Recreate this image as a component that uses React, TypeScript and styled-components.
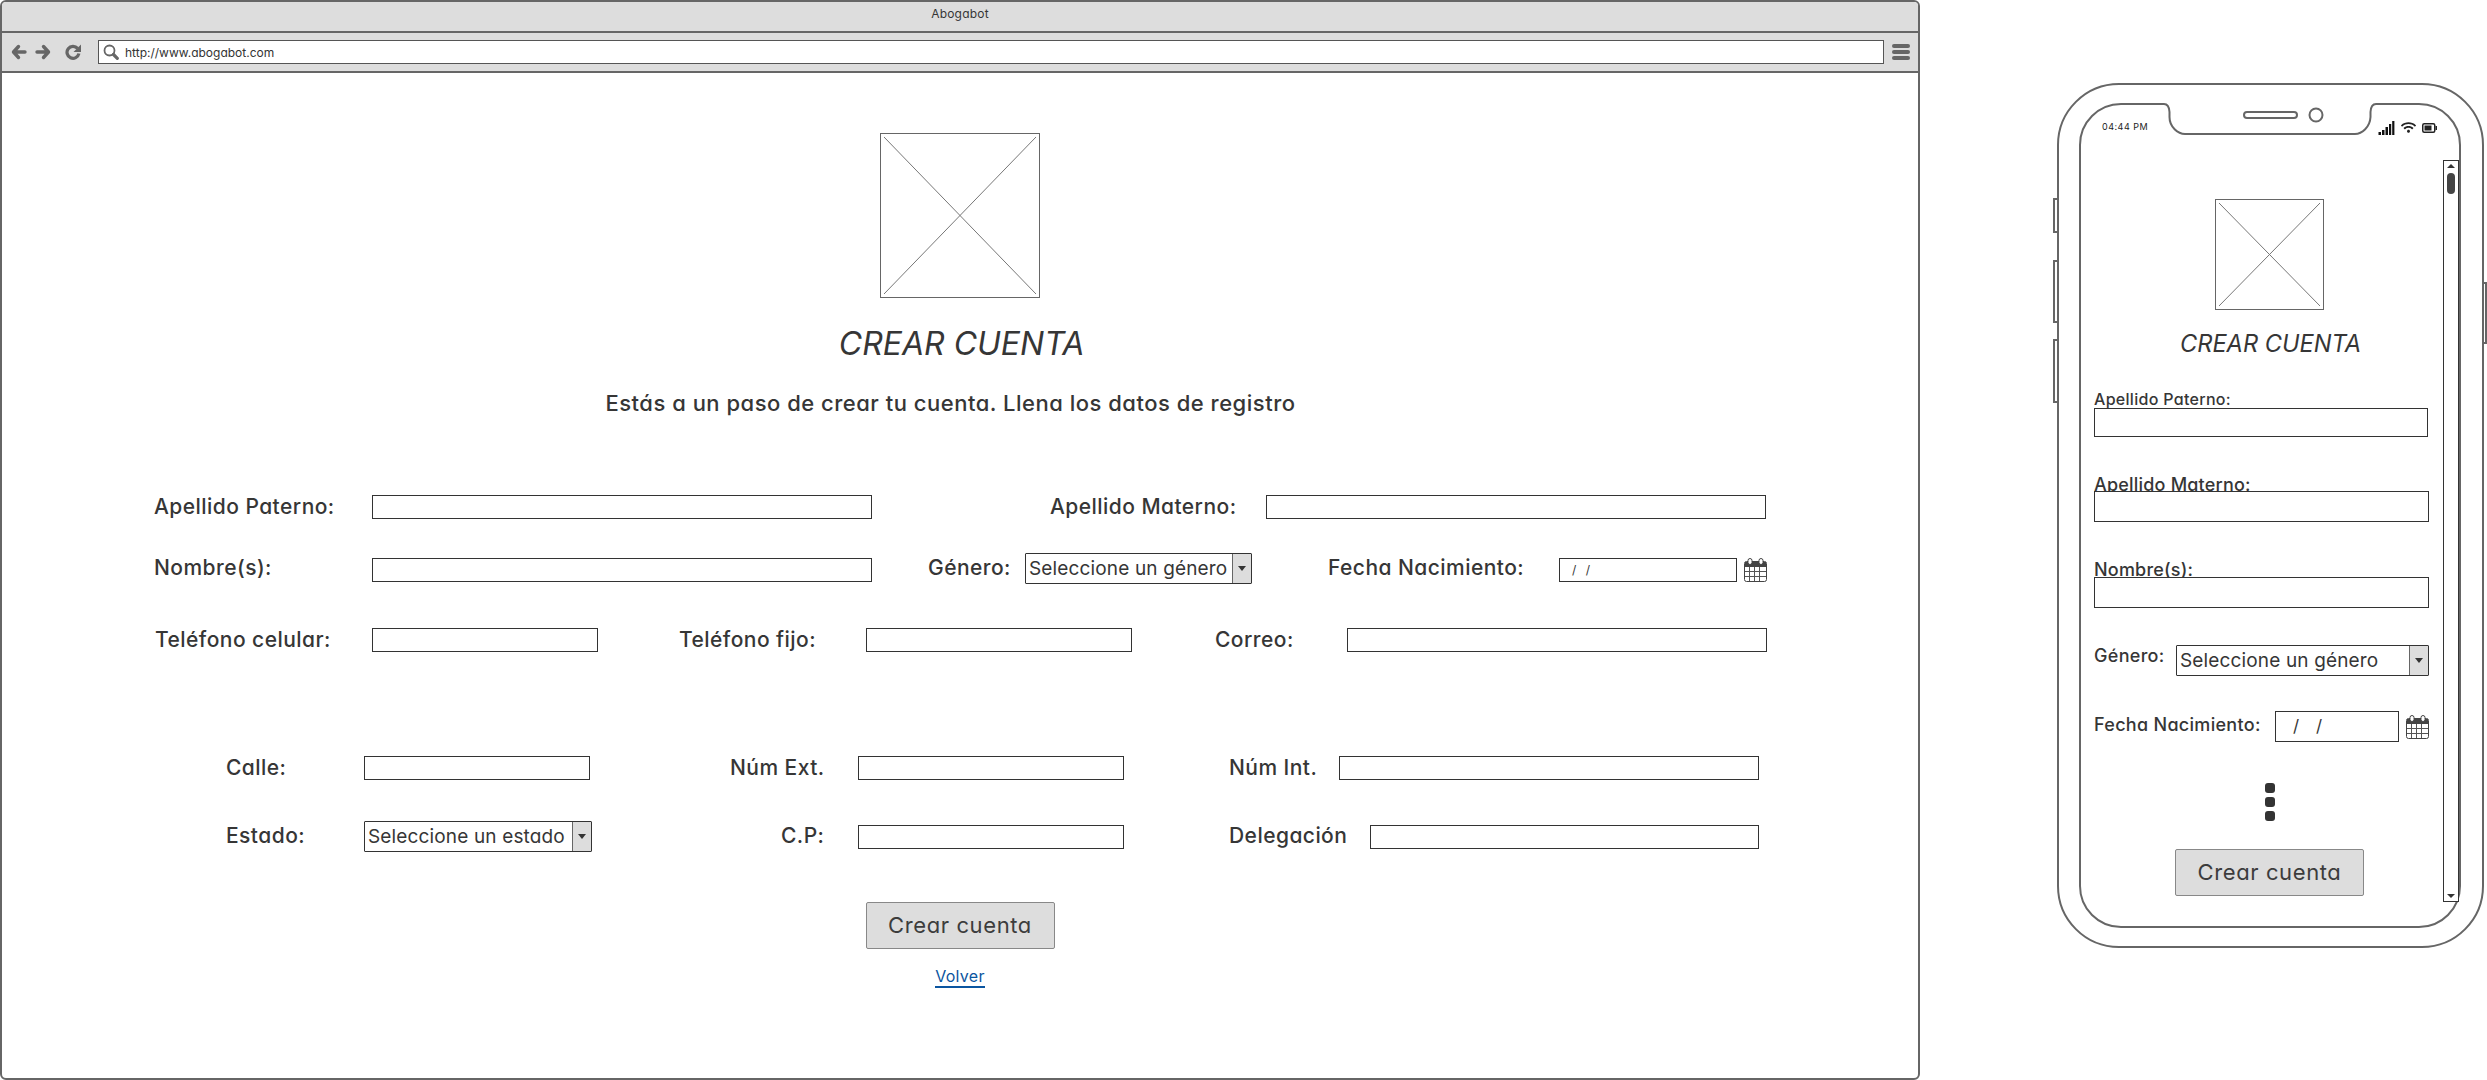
import React from 'react';
import styled, { createGlobalStyle } from 'styled-components';
import { FaWifi } from 'react-icons/fa';

const GlobalStyle = createGlobalStyle`
  html, body {
    margin: 0;
    padding: 0;
    background: #fff;
    overflow: hidden;
  }
  * {
    box-sizing: border-box;
  }
  body {
    font-family: Inter, "Open Sans", sans-serif;
    font-feature-settings: "cv11";
    color: #363636;
  }
`;

const Page = styled('div')`
  display: flex;
  align-items: flex-start;
  width: 2487px;
  height: 1080px;
`;

const Browser = styled('div')`
  width: 1920px;
  height: 1080px;
  flex: none;
  border: 2px solid #666;
  border-radius: 6px;
  display: flex;
  flex-direction: column;
  overflow: hidden;
`;

const TitleBar = styled('div')`
  height: 31px;
  flex: none;
  background: #ddd;
  border-bottom: 2px solid #666;
  display: flex;
  justify-content: center;
  padding-top: 4px;
  font-size: 12px;
  line-height: 16px;
  letter-spacing: 0.2px;
`;

const Toolbar = styled('div')`
  height: 40px;
  flex: none;
  background: #ddd;
  border-bottom: 2px solid #666;
  display: flex;
  align-items: center;
  padding-left: 9px;
`;

const NavIcon = styled('svg')<{ $mr: number }>`
  flex: none;
  width: 16px;
  height: 16px;
  margin-right: ${(p) => p.$mr}px;
  fill: none;
  stroke: #666;
`;

const UrlBox = styled('div')`
  width: 1786px;
  height: 24px;
  background: #fff;
  border: 1px solid #555;
  display: flex;
  align-items: center;
  padding-left: 4px;
`;

const UrlText = styled('span')`
  color: #333;
  font-size: 12px;
  margin-left: 6px;
`;

const Burger = styled('div')`
  margin-left: 8px;
  width: 18px;
  display: flex;
  flex-direction: column;
  gap: 2px;
  span {
    display: block;
    height: 4px;
    border-radius: 2px;
    background: #666;
  }
`;

const Content = styled('div')`
  flex: 1;
  display: flex;
  flex-direction: column;
`;

const Hero = styled('div')`
  display: flex;
  flex-direction: column;
  align-items: center;
`;

const PlaceholderBox = styled('div')<{ $w: number; $h: number; $mt: number }>`
  width: ${(p) => p.$w}px;
  height: ${(p) => p.$h}px;
  margin-top: ${(p) => p.$mt}px;
  flex: none;
  background: #fff;
  border: 1px solid #666;
  padding: 3px;
  svg {
    display: block;
    width: 100%;
    height: 100%;
  }
`;

const Title = styled('h1')<{ $size: number; $mt: number; $ml: number }>`
  margin: ${(p) => p.$mt}px 0 0 ${(p) => p.$ml}px;
  font-size: ${(p) => p.$size}px;
  font-style: italic;
  font-weight: 400;
  line-height: 1.3;
  white-space: nowrap;
`;

const Subtitle = styled('p')`
  margin: 23px 0 0 -19px;
  font-size: 22px;
  font-weight: 500;
  line-height: 30px;
  letter-spacing: 0.5px;
  white-space: nowrap;
`;

const FormRow = styled('div')<{ $pl: number; $mt: number; $h: number }>`
  display: flex;
  align-items: center;
  height: ${(p) => p.$h}px;
  margin-top: ${(p) => p.$mt}px;
  padding-left: ${(p) => p.$pl}px;
`;

const Label = styled('label')<{ $w: number; $ml?: number }>`
  flex: none;
  width: ${(p) => p.$w}px;
  margin-left: ${(p) => p.$ml ?? 0}px;
  font-size: 21px;
  font-weight: 500;
  line-height: 24px;
  letter-spacing: 0.45px;
  white-space: nowrap;
`;

const TextInput = styled('input')<{ $w: number; $h?: number; $nudge?: number }>`
  flex: none;
  display: block;
  width: ${(p) => p.$w}px;
  height: ${(p) => p.$h ?? 24}px;
  margin-top: ${(p) => p.$nudge ?? 0}px;
  padding: 0;
  background: #fff;
  border: 1px solid #333;
  border-radius: 0;
  outline: none;
`;

const SelectBox = styled('div')<{ $w: number }>`
  flex: none;
  width: ${(p) => p.$w}px;
  height: 31px;
  display: flex;
  background: #fff;
  border: 1px solid #333;
  border-radius: 1px;
`;

const SelectText = styled('span')`
  flex: 1;
  padding-left: 3px;
  font-size: 19px;
  line-height: 29px;
  letter-spacing: 0.15px;
  white-space: nowrap;
`;

const SelectArrow = styled('span')`
  flex: none;
  width: 19px;
  background: #ddd;
  border-left: 1px solid #666;
  display: flex;
  align-items: center;
  justify-content: center;
  &::after {
    content: '';
    border-left: 4px solid transparent;
    border-right: 4px solid transparent;
    border-top: 5px solid #333;
  }
`;

const DateBox = styled('div')<{ $w: number; $h: number; $pl: number; $size: number; $ls: number; $nudge?: number }>`
  flex: none;
  width: ${(p) => p.$w}px;
  height: ${(p) => p.$h}px;
  margin-top: ${(p) => p.$nudge ?? 0}px;
  background: #fff;
  border: 1px solid #333;
  padding-left: ${(p) => p.$pl}px;
  font-size: ${(p) => p.$size}px;
  line-height: ${(p) => p.$h - 2}px;
  letter-spacing: ${(p) => p.$ls}px;
  white-space: pre;
`;

const CalendarIcon = styled('svg')<{ $nudge?: number }>`
  flex: none;
  width: 23px;
  height: 24px;
  margin-left: 7px;
  margin-top: ${(p) => p.$nudge ?? 0}px;
`;

const ActionButton = styled('button')<{ $w: number; $mt: number }>`
  display: block;
  width: ${(p) => p.$w}px;
  height: 47px;
  margin-top: ${(p) => p.$mt}px;
  padding: 0;
  background: #ddd;
  border: 1px solid #888;
  border-radius: 2px;
  color: #3c3c3c;
  font-family: inherit;
  font-feature-settings: inherit;
  font-size: 22px;
  letter-spacing: 0.6px;
`;

const BackLink = styled('a')`
  display: block;
  margin-top: 18px;
  font-size: 16px;
  line-height: 19px;
  color: #0b55a0;
  border-bottom: 2px solid #0b55a0;
  letter-spacing: 0.3px;
`;

const PhoneWrap = styled('div')`
  display: flex;
  flex: none;
  margin-left: 133px;
  margin-top: 83px;
`;

const SideKeys = styled('div')<{ $w: number; $pt: number }>`
  flex: none;
  width: ${(p) => p.$w}px;
  padding-top: ${(p) => p.$pt}px;
  display: flex;
  flex-direction: column;
`;

const SideKey = styled('div')<{ $h: number; $mb?: number; $right?: boolean }>`
  height: ${(p) => p.$h}px;
  margin-bottom: ${(p) => p.$mb ?? 0}px;
  background: #fff;
  border: 2px solid #666;
  ${(p) => (p.$right ? 'border-left: none;' : 'border-right: none;')}
`;

const Phone = styled('div')`
  width: 427px;
  height: 865px;
  flex: none;
  border: 2px solid #666;
  border-radius: 62px;
  padding: 18px 0 0 20px;
`;

const Screen = styled('div')`
  width: 382px;
  height: 825px;
  border: 2px solid #666;
  border-radius: 42px;
  display: flex;
  flex-direction: column;
`;

const StatusBar = styled('div')`
  height: 55px;
  flex: none;
  display: flex;
  align-items: flex-start;
`;

const Clock = styled('span')`
  width: 83px;
  flex: none;
  padding: 16px 0 0 21px;
  font-size: 9px;
  line-height: 12px;
  letter-spacing: 0.5px;
  color: #222;
`;

const NotchArt = styled('svg')`
  flex: none;
  margin-top: -2px;
`;

const StatusIcons = styled('div')`
  flex: none;
  display: flex;
  align-items: center;
  gap: 6px;
  margin-left: 2px;
  margin-top: 15px;
  color: #222;
`;

const ScreenBody = styled('div')`
  display: flex;
  align-items: flex-start;
`;

const MobileForm = styled('div')`
  width: 362px;
  flex: none;
  padding-left: 13px;
  display: flex;
  flex-direction: column;
  align-items: flex-start;
`;

const CenterBlock = styled('div')`
  width: 351px;
  flex: none;
  display: flex;
  flex-direction: column;
  align-items: center;
`;

const MobileLabel = styled('label')<{ $mt: number; $h: number; $size: number; $ls: number }>`
  display: block;
  height: ${(p) => p.$h}px;
  margin-top: ${(p) => p.$mt}px;
  font-size: ${(p) => p.$size}px;
  font-weight: 500;
  line-height: 20px;
  letter-spacing: ${(p) => p.$ls}px;
  white-space: nowrap;
`;

const MobileRow = styled('div')<{ $mt: number }>`
  display: flex;
  align-items: flex-start;
  margin-top: ${(p) => p.$mt}px;
`;

const RowLabel = styled('label')<{ $w: number; $lh: number }>`
  flex: none;
  width: ${(p) => p.$w}px;
  font-size: 18px;
  font-weight: 500;
  line-height: ${(p) => p.$lh}px;
  letter-spacing: 0.3px;
  white-space: nowrap;
`;

const Dots = styled('div')`
  display: flex;
  flex-direction: column;
  gap: 4px;
  margin-top: 41px;
  span {
    display: block;
    width: 10px;
    height: 10px;
    border-radius: 3px;
    background: #333;
  }
`;

const Scrollbar = styled('div')`
  width: 16px;
  height: 742px;
  flex: none;
  background: #fff;
  border: 1px solid #333;
  display: flex;
  flex-direction: column;
  align-items: center;
  justify-content: space-between;
  padding: 3px 0;
`;

const ScrollArrow = styled('span')<{ $up?: boolean }>`
  display: block;
  border-left: 4px solid transparent;
  border-right: 4px solid transparent;
  ${(p) => (p.$up ? 'border-bottom: 4px solid #333;' : 'border-top: 4px solid #333;')}
`;

const ScrollTop = styled('div')`
  display: flex;
  flex-direction: column;
  align-items: center;
  gap: 5px;
`;

const ScrollThumb = styled('span')`
  display: block;
  width: 8px;
  height: 21px;
  border-radius: 4px;
  background: #444;
`;

const Placeholder: React.FC<{ w: number; h: number; mt: number }> = ({ w, h, mt }) => (
  <PlaceholderBox $w={w} $h={h} $mt={mt}>
    <svg viewBox="0 0 100 100" preserveAspectRatio="none">
      <line x1="0" y1="0" x2="100" y2="100" stroke="#777" strokeWidth="1" vectorEffect="non-scaling-stroke" />
      <line x1="100" y1="0" x2="0" y2="100" stroke="#777" strokeWidth="1" vectorEffect="non-scaling-stroke" />
    </svg>
  </PlaceholderBox>
);

const Calendar = () => (
  <>
    <rect x="0.5" y="3.5" width="22" height="20" rx="2" fill="#fff" stroke="#444" />
    <rect x="1" y="4" width="21" height="5" fill="#444" />
    <rect x="4" y="0.5" width="4" height="6" rx="2" fill="#fff" stroke="#444" />
    <rect x="15" y="0.5" width="4" height="6" rx="2" fill="#fff" stroke="#444" />
    <path d="M1 13.5H22M1 18.5H22M5.5 9V23M10.5 9V23M15.5 9V23" stroke="#555" strokeWidth="1" fill="none" />
  </>
);

const Select: React.FC<{ w: number; text: string }> = ({ w, text }) => (
  <SelectBox $w={w}>
    <SelectText>{text}</SelectText>
    <SelectArrow />
  </SelectBox>
);

const App: React.FC = () => {
  return (
    <Page>
      <GlobalStyle />
      <Browser>
        <TitleBar>Abogabot</TitleBar>
        <Toolbar>
          <NavIcon $mr={8} viewBox="0 0 16 16" strokeWidth="3.4" strokeLinecap="round" strokeLinejoin="round">
            <path d="M7.5 2.5L2.5 8L7.5 13.5M3 8H14" />
          </NavIcon>
          <NavIcon $mr={14} viewBox="0 0 16 16" strokeWidth="3.4" strokeLinecap="round" strokeLinejoin="round">
            <path d="M8.5 2.5L13.5 8L8.5 13.5M13 8H2" />
          </NavIcon>
          <NavIcon $mr={17} viewBox="0 0 16 16" strokeWidth="3.2">
            <path d="M12.6 4.4A6 6 0 1 0 13.9 9.5" />
            <path d="M16 0.5V8H8.5Z" fill="#666" stroke="none" />
          </NavIcon>
          <UrlBox>
            <NavIcon $mr={0} viewBox="0 0 16 16" strokeWidth="1.8">
              <circle cx="6.5" cy="6.5" r="5" />
              <path d="M10.5 10.5L14.3 14.3" strokeWidth="3.2" strokeLinecap="round" />
            </NavIcon>
            <UrlText>http://www.abogabot.com</UrlText>
          </UrlBox>
          <Burger><span /><span /><span /></Burger>
        </Toolbar>
        <Content>
          <Hero>
            <Placeholder w={160} h={165} mt={60} />
            <Title $size={32} $mt={25} $ml={3}>CREAR CUENTA</Title>
            <Subtitle>Estás a un paso de crear tu cuenta. Llena los datos de registro</Subtitle>
          </Hero>

          <FormRow $pl={152} $mt={77} $h={24}>
            <Label $w={218}>Apellido Paterno:</Label>
            <TextInput $w={500} readOnly />
            <Label $w={216} $ml={178}>Apellido Materno:</Label>
            <TextInput $w={500} readOnly />
          </FormRow>

          <FormRow $pl={152} $mt={34} $h={31}>
            <Label $w={218}>Nombre(s):</Label>
            <TextInput $w={500} $nudge={3} readOnly />
            <Label $w={97} $ml={56}>Género:</Label>
            <Select w={227} text="Seleccione un género" />
            <Label $w={231} $ml={76}>Fecha Nacimiento:</Label>
            <DateBox $w={178} $h={24} $pl={12} $size={12} $ls={3} $nudge={3}>/ /</DateBox>
            <CalendarIcon viewBox="0 0 23 24" $nudge={3}><Calendar /></CalendarIcon>
          </FormRow>

          <FormRow $pl={153} $mt={44} $h={24}>
            <Label $w={217}>Teléfono celular:</Label>
            <TextInput $w={226} readOnly />
            <Label $w={187} $ml={81}>Teléfono fijo:</Label>
            <TextInput $w={266} readOnly />
            <Label $w={132} $ml={83}>Correo:</Label>
            <TextInput $w={420} readOnly />
          </FormRow>

          <FormRow $pl={224} $mt={104} $h={24}>
            <Label $w={138}>Calle:</Label>
            <TextInput $w={226} readOnly />
            <Label $w={128} $ml={140}>Núm Ext.</Label>
            <TextInput $w={266} readOnly />
            <Label $w={110} $ml={105}>Núm Int.</Label>
            <TextInput $w={420} readOnly />
          </FormRow>

          <FormRow $pl={224} $mt={41} $h={31}>
            <Label $w={138}>Estado:</Label>
            <Select w={228} text="Seleccione un estado" />
            <Label $w={77} $ml={189}>C.P:</Label>
            <TextInput $w={266} $nudge={1} readOnly />
            <Label $w={141} $ml={105}>Delegación</Label>
            <TextInput $w={389} $nudge={1} readOnly />
          </FormRow>

          <Hero>
            <ActionButton $w={189} $mt={50}>Crear cuenta</ActionButton>
            <BackLink>Volver</BackLink>
          </Hero>
        </Content>
      </Browser>

      <PhoneWrap>
        <SideKeys $w={4} $pt={115}>
          <SideKey $h={35} $mb={27} />
          <SideKey $h={63} $mb={16} />
          <SideKey $h={64} />
        </SideKeys>
        <Phone>
          <Screen>
            <StatusBar>
              <Clock>04:44 PM</Clock>
              <NotchArt width="212" height="36" viewBox="0 0 212 36">
                <path d="M0 2Q5 2 5.5 9V14C5.5 24 14 32 21 32H191C198 32 206 24 206.5 14V9Q207 2 212 2V0H0Z" fill="#fff" />
                <path d="M0 1Q5 1 5.5 9V14C5.5 24 14 31 21 31H191C198 31 206 24 206.5 14V9Q207 1 212 1" fill="none" stroke="#666" strokeWidth="2" />
                <rect x="80" y="9" width="53" height="6" rx="3" fill="#fff" stroke="#666" strokeWidth="2" />
                <circle cx="152" cy="12" r="6.5" fill="#fff" stroke="#666" strokeWidth="2" />
              </NotchArt>
              <StatusIcons>
                <svg width="17" height="14" viewBox="0 0 17 14">
                  <path d="M0.5 11H3V14H0.5ZM4 9H6.5V14H4ZM7.5 6H10V14H7.5ZM11 3H13.2V14H11ZM14.2 0H16.4V14H14.2Z" fill="#111" />
                </svg>
                <FaWifi size={15} />
                <svg width="15" height="10" viewBox="0 0 15 10">
                  <rect x="0.75" y="0.75" width="12" height="8.5" rx="1.5" fill="none" stroke="#222" strokeWidth="1.5" />
                  <rect x="2.5" y="2.5" width="7" height="5" fill="#222" />
                  <rect x="13.5" y="3" width="1.5" height="4" fill="#222" />
                </svg>
              </StatusIcons>
            </StatusBar>
            <ScreenBody>
              <MobileForm>
                <CenterBlock>
                  <Placeholder w={109} h={111} mt={39} />
                  <Title $size={23.6} $mt={19} $ml={2}>CREAR CUENTA</Title>
                </CenterBlock>

                <MobileLabel $mt={29} $h={19} $size={16} $ls={0.3}>Apellido Paterno:</MobileLabel>
                <TextInput $w={334} $h={29} readOnly />
                <MobileLabel $mt={38} $h={16} $size={18} $ls={0.2}>Apellido Materno:</MobileLabel>
                <TextInput $w={335} $h={31} readOnly />
                <MobileLabel $mt={38} $h={17} $size={18} $ls={0.2}>Nombre(s):</MobileLabel>
                <TextInput $w={335} $h={31} readOnly />

                <MobileRow $mt={37}>
                  <RowLabel $w={82} $lh={22}>Género:</RowLabel>
                  <Select w={253} text="Seleccione un género" />
                </MobileRow>

                <MobileRow $mt={35}>
                  <RowLabel $w={181} $lh={28}>Fecha Nacimiento:</RowLabel>
                  <DateBox $w={124} $h={31} $pl={17} $size={17} $ls={6}>/ /</DateBox>
                  <CalendarIcon viewBox="0 0 23 24" $nudge={4}><Calendar /></CalendarIcon>
                </MobileRow>

                <CenterBlock>
                  <Dots><span /><span /><span /></Dots>
                  <ActionButton $w={189} $mt={28}>Crear cuenta</ActionButton>
                </CenterBlock>
              </MobileForm>
              <Scrollbar>
                <ScrollTop>
                  <ScrollArrow $up />
                  <ScrollThumb />
                </ScrollTop>
                <ScrollArrow />
              </Scrollbar>
            </ScreenBody>
          </Screen>
        </Phone>
        <SideKeys $w={3} $pt={199}>
          <SideKey $h={62} $right />
        </SideKeys>
      </PhoneWrap>
    </Page>
  );
};

export default App;
